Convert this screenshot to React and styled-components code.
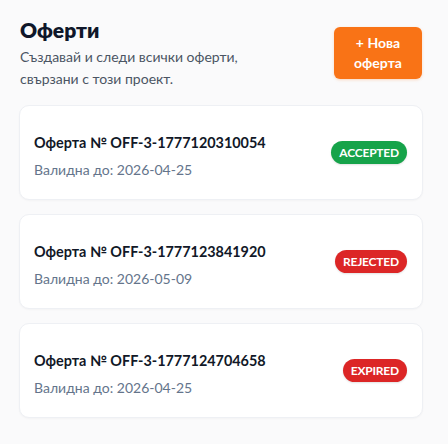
import React from 'react';
import styled, { createGlobalStyle } from 'styled-components';

const offers = [
  { id: 'OFF-3-1777120310054', validUntil: '2026-04-25', status: 'accepted' },
  { id: 'OFF-3-1777123841920', validUntil: '2026-05-09', status: 'rejected' },
  { id: 'OFF-3-1777124704658', validUntil: '2026-04-25', status: 'expired' },
];

const statusColors = {
  accepted: '#16a34a',
  rejected: '#dc2626',
  expired: '#dc2626',
};

const App = () => {
  return (
    <>
      <GlobalStyle />
      <Page>
        <Header>
          <HeaderText>
            <Title>Оферти</Title>
            <Subtitle>
              Създавай и следи всички оферти,
              <br />
              свързани с този проект.
            </Subtitle>
          </HeaderText>
          <NewButton>+ Нова оферта</NewButton>
        </Header>
        <OfferList>
          {offers.map((offer) => (
            <OfferCard key={offer.id}>
              <OfferInfo>
                <OfferTitle>Оферта № {offer.id}</OfferTitle>
                <OfferDate>Валидна до: {offer.validUntil}</OfferDate>
              </OfferInfo>
              <StatusBadge color={statusColors[offer.status]}>{offer.status}</StatusBadge>
            </OfferCard>
          ))}
        </OfferList>
      </Page>
    </>
  );
};

const GlobalStyle = createGlobalStyle`
  body {
    margin: 0;
    background: #fafafb;
    font-family: Lato, "Noto Sans", sans-serif;
  }
`;

const Page = styled.div`
  padding: 16px 25px 20px 19px;
`;

const Header = styled.div`
  display: flex;
  align-items: center;
  justify-content: space-between;
  margin-bottom: 15px;
`;

const HeaderText = styled.div`
  display: flex;
  flex-direction: column;
  padding-left: 1px;
`;

const Title = styled.h1`
  margin: 0 0 2px;
  font-size: 21px;
  line-height: 28px;
  font-weight: 800;
  color: #0f172a;
`;

const Subtitle = styled.p`
  margin: 0;
  font-size: 14px;
  line-height: 22px;
  color: #4b5563;
`;

const NewButton = styled.button`
  width: 88px;
  margin-right: 1px;
  padding: 6px 10px;
  border: none;
  border-radius: 6px;
  background: #f97316;
  color: #ffffff;
  font-family: inherit;
  font-size: 14px;
  font-weight: 700;
  line-height: 20px;
  box-shadow: 0 1px 3px rgba(249, 115, 22, 0.25);
`;

const OfferList = styled.div`
  display: flex;
  flex-direction: column;
  gap: 14px;
`;

const OfferCard = styled.div`
  display: flex;
  align-items: center;
  justify-content: space-between;
  height: 95px;
  box-sizing: border-box;
  padding: 0 15px 0 14px;
  background: #ffffff;
  border: 1px solid #eef0f4;
  border-radius: 10px;
  box-shadow: 0 1px 2px rgba(15, 23, 42, 0.03);
`;

const OfferInfo = styled.div`
  display: flex;
  flex-direction: column;
  gap: 7px;
  margin-top: 7px;
`;

const OfferTitle = styled.div`
  font-size: 14.4px;
  line-height: 20px;
  font-weight: 700;
  color: #111827;
`;

const OfferDate = styled.div`
  font-size: 14px;
  line-height: 20px;
  color: #64748b;
`;

const StatusBadge = styled.span`
  display: inline-flex;
  align-items: center;
  height: 23px;
  padding: 0 8px;
  box-sizing: border-box;
  border-radius: 999px;
  background: ${(props) => props.color};
  color: #ffffff;
  font-size: 12px;
  font-weight: 700;
  letter-spacing: -0.2px;
  text-transform: uppercase;
  box-shadow: 0 1px 2px rgba(0, 0, 0, 0.12);
`;

export default App;
